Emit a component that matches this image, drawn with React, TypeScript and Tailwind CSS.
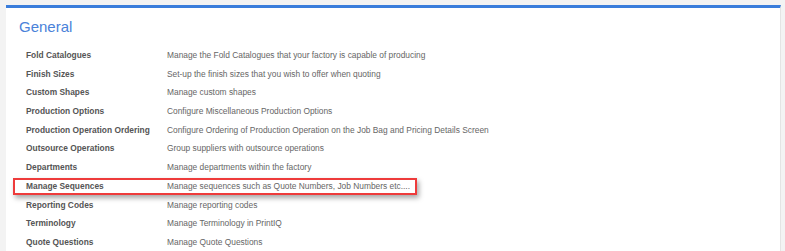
import React from "react"

type Setting = {
  label: string
  description: string
  highlight?: boolean
}

const settings: Setting[] = [
  { label: "Fold Catalogues", description: "Manage the Fold Catalogues that your factory is capable of producing" },
  { label: "Finish Sizes", description: "Set-up the finish sizes that you wish to offer when quoting" },
  { label: "Custom Shapes", description: "Manage custom shapes" },
  { label: "Production Options", description: "Configure Miscellaneous Production Options" },
  {
    label: "Production Operation Ordering",
    description: "Configure Ordering of Production Operation on the Job Bag and Pricing Details Screen",
  },
  { label: "Outsource Operations", description: "Group suppliers with outsource operations" },
  { label: "Departments", description: "Manage departments within the factory" },
  {
    label: "Manage Sequences",
    description: "Manage sequences such as Quote Numbers, Job Numbers etc....",
    highlight: true,
  },
  { label: "Reporting Codes", description: "Manage reporting codes" },
  { label: "Terminology", description: "Manage Terminology in PrintIQ" },
  { label: "Quote Questions", description: "Manage Quote Questions" },
]

export default function App() {
  return (
    <div className="min-h-screen bg-[#f3f3f3] pt-[5px] pl-[6px] pr-[4px] font-['Liberation_Sans',Arial,sans-serif]">
      <div className="bg-white border-t-[3px] border-[#3a7ddb] border-r border-r-[#e4e4e4] pb-6">
        {/* Section heading */}
        <h2 className="pl-[13px] pt-[10px] pb-[10px] text-[15px] leading-[18px] text-[#4a82d9]">General</h2>

        <div className="flex flex-col">
          {settings.map((s) => (
            <SettingRow key={s.label} setting={s} />
          ))}
        </div>
      </div>
    </div>
  )
}

function SettingRow({ setting }: { setting: Setting }) {
  if (setting.highlight) {
    return (
      <div className="h-[18.7px] flex items-center">
        <div className="ml-[7px] w-[404px] h-[17px] flex items-center border-2 border-[#ee3b3b] shadow-[2px_3px_5px_rgba(0,0,0,0.35)] pl-[11px]">
          <RowText setting={setting} />
        </div>
      </div>
    )
  }
  return (
    <div className="h-[18.7px] flex items-center pl-[20px]">
      <RowText setting={setting} />
    </div>
  )
}

function RowText({ setting }: { setting: Setting }) {
  return (
    <>
      <span className="w-[141px] shrink-0 text-[8.4px] font-bold text-[#555555]">{setting.label}</span>
      <span className="text-[8.4px] text-[#666666] whitespace-nowrap">{setting.description}</span>
    </>
  )
}
